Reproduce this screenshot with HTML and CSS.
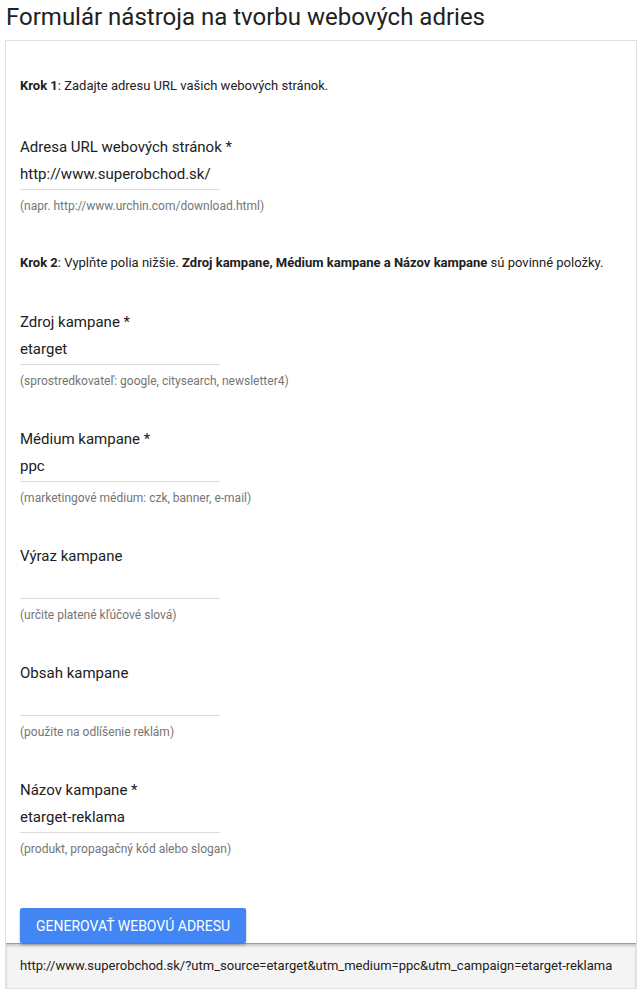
FILE: index.html
```html
<!DOCTYPE html>
<html lang="sk">
<head>
<meta charset="utf-8">
<title>Formulár nástroja na tvorbu webových adries</title>
<link rel="stylesheet" href="styles.css">
</head>
<body>
<h1 class="title">Formulár nástroja na tvorbu webových adries</h1>
<div class="card">
  <div class="card-body">
    <p class="step step-first"><b>Krok 1</b>: Zadajte adresu URL vašich webových stránok.</p>
    <div class="field">
      <div class="label">Adresa URL webových stránok *</div>
      <div class="input">http://www.superobchod.sk/</div>
      <div class="hint">(napr. http://www.urchin.com/download.html)</div>
    </div>
    <p class="step"><b>Krok 2</b>: Vyplňte polia nižšie. <b>Zdroj kampane, Médium kampane a Názov kampane</b> sú povinné položky.</p>
    <div class="field">
      <div class="label">Zdroj kampane *</div>
      <div class="input">etarget</div>
      <div class="hint">(sprostredkovateľ: google, citysearch, newsletter4)</div>
    </div>
    <div class="field">
      <div class="label">Médium kampane *</div>
      <div class="input">ppc</div>
      <div class="hint">(marketingové médium: czk, banner, e-mail)</div>
    </div>
    <div class="field">
      <div class="label">Výraz kampane</div>
      <div class="input"></div>
      <div class="hint">(určite platené kľúčové slová)</div>
    </div>
    <div class="field">
      <div class="label">Obsah kampane</div>
      <div class="input"></div>
      <div class="hint">(použite na odlíšenie reklám)</div>
    </div>
    <div class="field">
      <div class="label">Názov kampane *</div>
      <div class="input">etarget-reklama</div>
      <div class="hint">(produkt, propagačný kód alebo slogan)</div>
    </div>
    <div class="actions">
      <button class="btn" type="button">Generovať webovú adresu</button>
    </div>
  </div>
  <div class="result">http://www.superobchod.sk/?utm_source=etarget&amp;utm_medium=ppc&amp;utm_campaign=etarget-reklama</div>
</div>
</body>
</html>
```
FILE: styles.css
```css
html, body {
  margin: 0;
  padding: 0;
  background: #fff;
}
body {
  padding: 0 5px;
  font-family: Roboto, "Liberation Sans", Arial, sans-serif;
  color: #212121;
}
.title {
  margin: 0;
  padding: 2px 0 0 1px;
  height: 38px;
  font-size: 24px;
  line-height: 30px;
  font-weight: 400;
  color: #212121;
}
.card {
  border: 1px solid #e0e0e0;
  background: #fff;
}
.card-body {
  padding: 37px 14px 0 14px;
}
.step {
  margin: 42px 0 0 0;
  font-size: 13px;
  line-height: 16px;
  color: #212121;
}
.step.step-first {
  margin-top: 0;
}
.step b {
  font-weight: 700;
}
.field {
  margin-top: 41px;
  display: flex;
  flex-direction: column;
  align-items: flex-start;
}
.step-first + .field {
  margin-top: 43px;
}
.label {
  font-size: 15px;
  line-height: 20px;
  color: #212121;
}
.input {
  margin-top: 7px;
  width: 200px;
  height: 20px;
  padding-bottom: 5px;
  border-bottom: 1px solid #dcdcdc;
  font-size: 15px;
  line-height: 20px;
  color: #212121;
}
.hint {
  margin-top: 9px;
  font-size: 12px;
  line-height: 14px;
  color: #757575;
}
.actions {
  margin-top: 52px;
  position: relative;
  z-index: 1;
}
.btn {
  display: block;
  height: 35px;
  padding: 0 16px;
  border: 0;
  border-radius: 2px;
  background: #4285f4;
  color: #fff;
  font-family: Roboto, "Liberation Sans", Arial, sans-serif;
  font-size: 14px;
  font-weight: 400;
  text-transform: uppercase;
  box-shadow: 0 2px 3px rgba(0,0,0,0.28);
  cursor: pointer;
}
.result {
  background: #f4f4f4;
  border-top: 1px solid #9e9e9e;
  box-shadow: inset 0 2px 3px rgba(0,0,0,0.18);
  padding: 14px 14px 14px 14px;
  font-size: 13px;
  line-height: 16px;
  color: #212121;
}
```
